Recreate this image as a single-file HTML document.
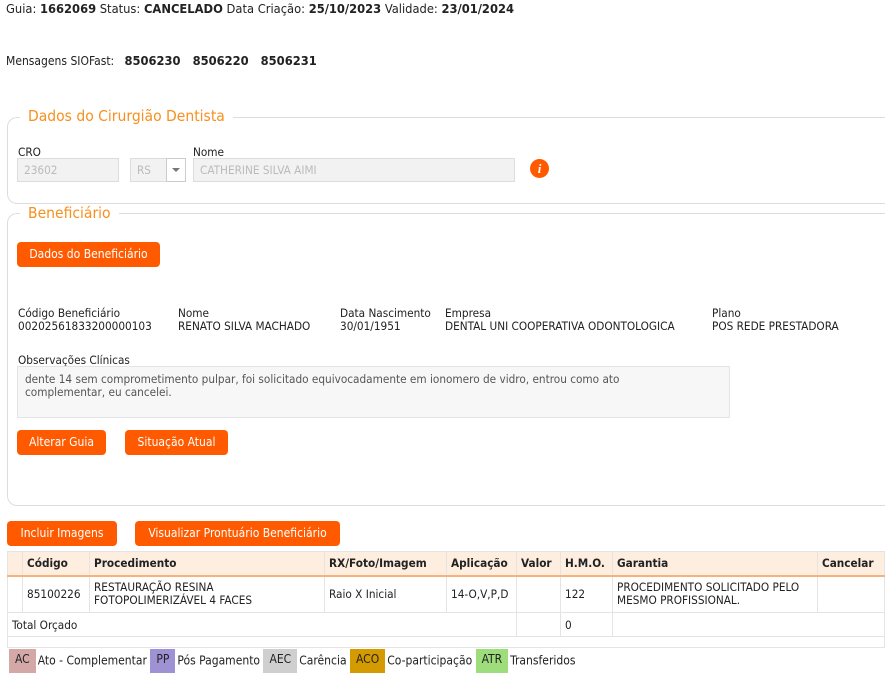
<!DOCTYPE html><html><head><meta charset="utf-8"><style>
*{box-sizing:border-box}
body{margin:0;width:885px;height:688px;background:#fff;font-family:"DejaVu Sans Condensed","DejaVu Sans",sans-serif;font-size:11.7px;color:#222;position:relative;overflow:hidden}
.a{position:absolute;white-space:nowrap}
.btn{position:absolute;background:#ff5a00;color:#fff;border-radius:4px;height:25px;line-height:25px;text-align:center;font-size:12px}
.fs{position:absolute;border:1px solid #ddd;border-right:none;border-radius:10px 0 0 10px}
.lg{position:absolute;background:#fff;color:#f7901e;font-size:15.5px;padding:0 8px}
.inp{position:absolute;background:#f2f2f2;border:1px solid #ddd;color:#bbb;height:24px;line-height:22px;padding-left:6px}
table{position:absolute;border-collapse:collapse;font-size:11.7px}
td,th{border:1px solid #e4e4e4;padding:0 4px;text-align:left}
th{background:#fdeee0;border-bottom:2px solid #f6b27a;height:24px;font-weight:bold}
.tag{display:inline-block;height:24px;line-height:20px;padding:0 6px;vertical-align:middle;margin-right:2px}
</style></head><body>
<div class="a" style="left:6px;top:2px;font-size:12.8px">Guia: <b>1662069</b> Status: <b>CANCELADO</b> Data Criação: <b>25/10/2023</b> Validade: <b>23/01/2024</b></div>
<div class="a" style="left:6px;top:54px;font-size:12px">Mensagens SIOFast: &nbsp;&nbsp;<b style="font-size:12.8px">8506230 &nbsp;&nbsp;8506220 &nbsp;&nbsp;8506231</b></div>

<div class="fs" style="left:7px;top:117px;width:880px;height:87px"></div>
<div class="lg" style="left:20px;top:107px">Dados do Cirurgião Dentista</div>
<div class="a" style="left:18px;top:145px">CRO</div>
<div class="a" style="left:193px;top:145px">Nome</div>
<div class="inp" style="left:17px;top:158px;width:102px">23602</div>
<div class="inp" style="left:130px;top:158px;width:44px">RS</div>
<div style="position:absolute;left:166px;top:158px;width:20px;height:24px;border:1px solid #ccc;background:#fff"></div>
<div style="position:absolute;left:172px;top:168px;border-left:4px solid transparent;border-right:4px solid transparent;border-top:4px solid #777"></div>
<div class="inp" style="left:193px;top:158px;width:322px">CATHERINE SILVA AIMI</div>
<div style="position:absolute;left:530px;top:159px;width:19px;height:19px;border-radius:50%;background:#ff5a00;color:#fff;font:italic bold 13px 'Liberation Serif',serif;text-align:center;line-height:19px">i</div>

<div class="fs" style="left:7px;top:213px;width:880px;height:293px"></div>
<div class="lg" style="left:20px;top:204px">Beneficiário</div>
<div class="btn" style="left:17px;top:242px;width:143px">Dados do Beneficiário</div>
<div class="a" style="left:18px;top:307px;line-height:13px">Código Beneficiário<br>00202561833200000103</div>
<div class="a" style="left:178px;top:307px;line-height:13px">Nome<br>RENATO SILVA MACHADO</div>
<div class="a" style="left:340px;top:307px;line-height:13px">Data Nascimento<br>30/01/1951</div>
<div class="a" style="left:445px;top:307px;line-height:13px">Empresa<br>DENTAL UNI COOPERATIVA ODONTOLOGICA</div>
<div class="a" style="left:712px;top:307px;line-height:13px">Plano<br>POS REDE PRESTADORA</div>
<div class="a" style="left:18px;top:353px">Observações Clínicas</div>
<div style="position:absolute;left:17px;top:366px;width:713px;height:52px;border:1px solid #e4e4e4;background:#f7f7f7;color:#555;padding:6px 7px;line-height:13px">dente 14 sem comprometimento pulpar, foi solicitado equivocadamente em ionomero de vidro, entrou como ato<br>complementar, eu cancelei.</div>
<div class="btn" style="left:17px;top:430px;width:89px">Alterar Guia</div>
<div class="btn" style="left:125px;top:430px;width:103px">Situação Atual</div>

<div class="btn" style="left:7px;top:521px;width:110px">Incluir Imagens</div>
<div class="btn" style="left:135px;top:521px;width:205px">Visualizar Prontuário Beneficiário</div>

<table style="left:7px;top:551px;width:878px">
<tr><th style="width:15px"></th><th style="width:67px">Código</th><th style="width:235px">Procedimento</th><th style="width:122px">RX/Foto/Imagem</th><th style="width:70px">Aplicação</th><th style="width:44px">Valor</th><th style="width:52px">H.M.O.</th><th style="width:205px">Garantia</th><th>Cancelar</th></tr>
<tr style="height:37px;line-height:13px"><td></td><td>85100226</td><td>RESTAURAÇÃO RESINA<br>FOTOPOLIMERIZÁVEL 4 FACES</td><td>Raio X Inicial</td><td>14-O,V,P,D</td><td></td><td>122</td><td>PROCEDIMENTO SOLICITADO PELO<br>MESMO PROFISSIONAL.</td><td></td></tr>
<tr style="height:24px"><td colspan="5">Total Orçado</td><td></td><td>0</td><td colspan="2"></td></tr>
<tr style="height:11px"><td colspan="9"></td></tr>
</table>
<div class="a" style="left:9px;top:649px;font-size:12px"><span class="tag" style="background:#d5a8a8">AC</span>Ato - Complementar <span class="tag" style="background:#9f92d4">PP</span>Pós Pagamento <span class="tag" style="background:#cfcfcf">AEC</span>Carência <span class="tag" style="background:#d49b00">ACO</span>Co-participação <span class="tag" style="background:#9edd7c">ATR</span>Transferidos</div>
</body></html>
